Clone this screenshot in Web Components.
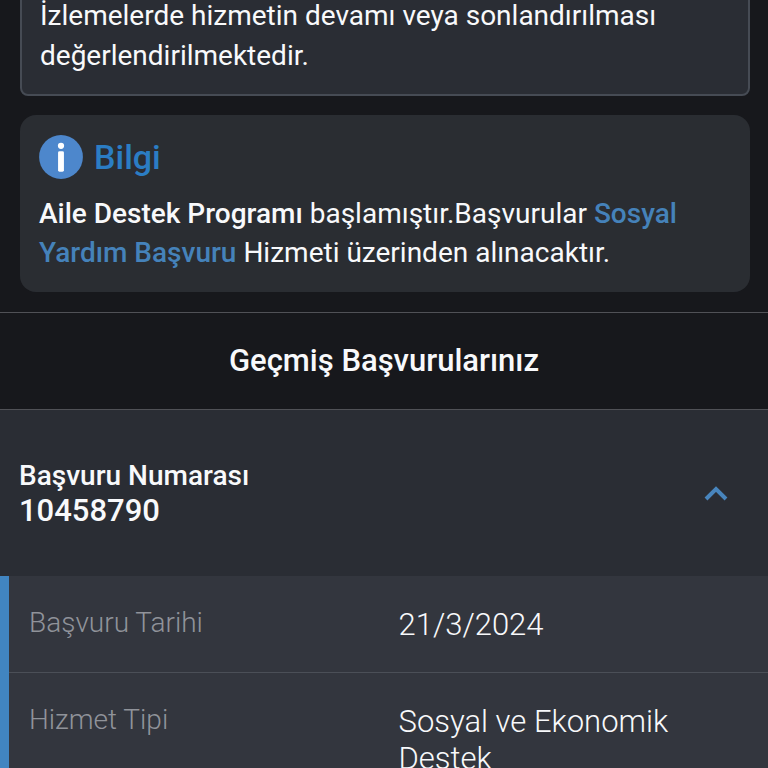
<!DOCTYPE html>
<html lang="tr">
<head>
<meta charset="utf-8">
<meta name="viewport" content="width=device-width, initial-scale=1">
<title>Geçmiş Başvurularınız</title>
<style>
  html, body {
    height: 100%;
  }

  body {
    margin: 0;
    overflow: hidden;
    background: #17181c;
    color: #f8f9fb;
    font-family: Roboto, "Liberation Sans", sans-serif;
    font-size: 28px;
    line-height: 40px;
  }
</style>
</head>
<body>
<basvuru-page></basvuru-page>

<script>
const noticeCardTemplate = document.createElement("template");

noticeCardTemplate.innerHTML = `
  <style>
    :host {
      display: block;
      box-sizing: border-box;
      padding: 18px;
      border: 2px solid #464b54;
      border-radius: 8px;
      background: #2a2d34;
    }
  </style>

  <slot></slot>
`;

class NoticeCard extends HTMLElement {
  constructor() {
    super();

    this.attachShadow({ mode: "open" });
    this.shadowRoot.appendChild(noticeCardTemplate.content.cloneNode(true));
  }
}

window.customElements.define("notice-card", NoticeCard);

const infoCardTemplate = document.createElement("template");

infoCardTemplate.innerHTML = `
  <style>
    :host {
      display: flex;
      flex-direction: column;
      gap: 15px;
      padding: 20px 19px;
      border-radius: 16px;
      background: #2a2d32;
      line-height: 39px;
    }

    header {
      display: flex;
      align-items: center;
      gap: 11px;
    }

    svg {
      width: 44px;
      height: 44px;
    }

    h2 {
      margin: 0;
      color: #2b7dc4;
      font-size: 34px;
      font-weight: 500;
      line-height: 44px;
    }
  </style>

  <header>
    <svg viewBox="0 0 45 45" aria-hidden="true">
      <circle cx="22.5" cy="22.5" r="22.4" fill="#4d87cc"/>
      <circle cx="22.5" cy="11" r="3.2" fill="#fff"/>
      <rect x="19.5" y="16.5" width="6" height="21" rx="1.5" fill="#fff"/>
    </svg>
    <h2></h2>
  </header>
  <div><slot></slot></div>
`;

class InfoCard extends HTMLElement {
  constructor() {
    super();

    this.attachShadow({ mode: "open" });
    this.shadowRoot.appendChild(infoCardTemplate.content.cloneNode(true));

    this.$title = this.shadowRoot.querySelector("h2");
  }

  connectedCallback() {
    this.$title.textContent = this.getAttribute("heading");
  }
}

window.customElements.define("info-card", InfoCard);

const sectionTitleTemplate = document.createElement("template");

sectionTitleTemplate.innerHTML = `
  <style>
    :host {
      display: block;
      padding: 28px 20px;
      border-top: 1px solid #505156;
      border-bottom: 1px solid #505156;
    }

    h1 {
      margin: 0;
      font-size: 31px;
      font-weight: 500;
      line-height: 40px;
      text-align: center;
    }
  </style>

  <h1><slot></slot></h1>
`;

class SectionTitle extends HTMLElement {
  constructor() {
    super();

    this.attachShadow({ mode: "open" });
    this.shadowRoot.appendChild(sectionTitleTemplate.content.cloneNode(true));
  }
}

window.customElements.define("section-title", SectionTitle);

const detailTableTemplate = document.createElement("template");

detailTableTemplate.innerHTML = `
  <style>
    :host {
      display: block;
      border-left: 9px solid #4185c1;
      background: #33363e;
    }

    table {
      width: 100%;
      table-layout: fixed;
      border-collapse: collapse;
    }

    tr {
      border-bottom: 1px solid #4b4f57;
    }

    th, td {
      padding: 30px 10px 29px;
      font-weight: 300;
      line-height: 37px;
      text-align: left;
      vertical-align: top;
    }

    th {
      padding-left: 20px;
      color: #90939a;
      line-height: 34px;
    }

    td {
      font-size: 31px;
    }
  </style>

  <table><tbody></tbody></table>
`;

class DetailTable extends HTMLElement {
  constructor() {
    super();

    this.attachShadow({ mode: "open" });
    this.shadowRoot.appendChild(detailTableTemplate.content.cloneNode(true));

    this.$body = this.shadowRoot.querySelector("tbody");
    this._rows = [];
  }

  set rows(rows) {
    this._rows = rows;
    this.render();
  }

  get rows() {
    return this._rows;
  }

  render() {
    this.$body.innerHTML = this._rows
      .map(([label, value]) => `<tr><th scope="row">${label}</th><td>${value}</td></tr>`)
      .join("");
  }
}

window.customElements.define("detail-table", DetailTable);

const basvuruItemTemplate = document.createElement("template");

basvuruItemTemplate.innerHTML = `
  <style>
    :host {
      display: block;
    }

    button {
      display: flex;
      align-items: center;
      justify-content: space-between;
      box-sizing: border-box;
      width: 100%;
      padding: 48px 40px 47px 19px;
      border: 0;
      background: #2a2d34;
      color: inherit;
      font: inherit;
      font-weight: 500;
      line-height: 35px;
      text-align: left;
      cursor: pointer;
    }

    .text {
      display: flex;
      flex-direction: column;
    }

    .number {
      font-size: 31px;
      line-height: 36px;
    }

    svg {
      width: 24px;
      height: 16px;
    }

    button[aria-expanded="false"] svg {
      transform: rotate(180deg);
    }
  </style>

  <button type="button" aria-expanded="true">
    <span class="text">
      <span>Başvuru Numarası</span>
      <span class="number"></span>
    </span>
    <svg viewBox="0 0 24 16" aria-hidden="true">
      <path d="M2 13 12 3l10 10" fill="none" stroke="#4885bd" stroke-width="4"/>
    </svg>
  </button>
  <slot></slot>
`;

class BasvuruItem extends HTMLElement {
  constructor() {
    super();

    this.attachShadow({ mode: "open" });
    this.shadowRoot.appendChild(basvuruItemTemplate.content.cloneNode(true));

    this.$button = this.shadowRoot.querySelector("button");
    this.$number = this.shadowRoot.querySelector(".number");
    this.$slot = this.shadowRoot.querySelector("slot");
  }

  connectedCallback() {
    this.$number.textContent = this.getAttribute("number");
    this.$button.addEventListener("click", this.handleToggle.bind(this));
  }

  handleToggle() {
    const open = this.$button.getAttribute("aria-expanded") === "true";
    this.$button.setAttribute("aria-expanded", String(!open));
    this.$slot.style.display = open ? "none" : "";
  }
}

window.customElements.define("basvuru-item", BasvuruItem);

const pageTemplate = document.createElement("template");

pageTemplate.innerHTML = `
  <style>
    /* the first card runs off the top of the view */
    :host {
      display: block;
      margin-top: -24px;
    }

    .cards {
      display: flex;
      flex-direction: column;
      gap: 19px;
      padding: 0 18px 20px 20px;
    }

    b {
      font-weight: 500;
    }

    a {
      color: #4582ba;
      font-weight: 500;
      text-decoration: none;
    }
  </style>

  <div class="cards">
    <notice-card>
      İzlemelerde hizmetin devamı veya sonlandırılması değerlendirilmektedir.
    </notice-card>
    <info-card heading="Bilgi">
      <b>Aile Destek Programı</b> başlamıştır.Başvurular
      <a href="#">Sosyal Yardım Başvuru</a> Hizmeti üzerinden alınacaktır.
    </info-card>
  </div>
  <section-title>Geçmiş Başvurularınız</section-title>
  <basvuru-item number="10458790">
    <detail-table></detail-table>
  </basvuru-item>
`;

class BasvuruPage extends HTMLElement {
  constructor() {
    super();

    this.attachShadow({ mode: "open" });
    this.shadowRoot.appendChild(pageTemplate.content.cloneNode(true));

    this.$details = this.shadowRoot.querySelector("detail-table");
  }

  connectedCallback() {
    window.customElements.upgrade(this.$details);
    this.$details.rows = [
      ["Başvuru Tarihi", "21/3/2024"],
      ["Hizmet Tipi", "Sosyal ve Ekonomik Destek"],
    ];
  }
}

window.customElements.define("basvuru-page", BasvuruPage);
</script>
</body>
</html>
